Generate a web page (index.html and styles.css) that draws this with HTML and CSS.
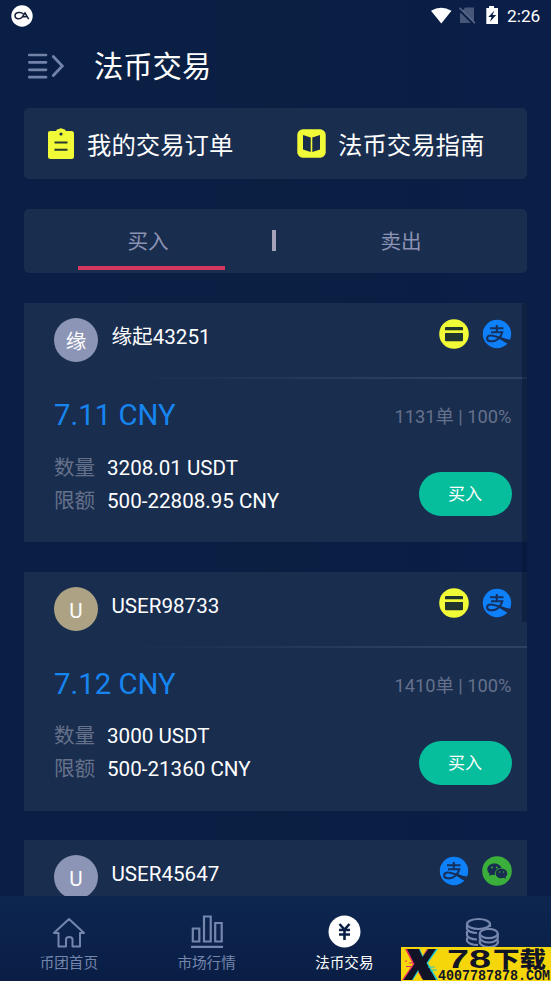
FILE: index.html
```html
<!DOCTYPE html>
<html lang="zh-CN">
<head>
<meta charset="utf-8">
<title>法币交易</title>
<link rel="stylesheet" href="styles.css">
</head>
<body>
<svg class="defs" width="0" height="0" aria-hidden="true">
  <symbol id="card-pay" viewBox="0 0 30 30">
    <circle cx="15" cy="15" r="14.8" fill="#f0fa36"/>
    <path d="M6 9Q6 8 7 8H23Q24 8 24 9V11.300H6ZM6 14H24V21Q24 22.300 22.700 22.300H7.300Q6 22.300 6 21Z" fill="#20352f"/>
  </symbol>
  <symbol id="alipay" viewBox="0 0 30 30">
    <circle cx="15" cy="15" r="14.200" fill="#0e81fa"/>
    <path d="M8 9.300H21.500M14.800 6V13M9 13.200H20.300C19 18.500 14.500 23 8.500 22.300C3.800 21.600 4 16.700 8.800 16.500C14.500 16.400 20 20.500 28.500 22.300" fill="none" stroke="#15305c" stroke-width="2.100"/>
    <path d="M18 18.800Q23 20.500 29.500 20.800V23L27 25.500Q21 22.500 17 19.500Z" fill="#182d4f"/>
  </symbol>
  <symbol id="wechat" viewBox="0 0 30 30">
    <circle cx="15" cy="15" r="14.800" fill="#3aaf3c"/>
    <path d="M12.300 7.500C8.300 7.500 5.300 10 5.300 13.300C5.300 15.200 6.200 16.700 7.700 17.800L7 20L9.700 18.700Q11 19.100 12.800 19C12.300 14.800 15.500 12 19.500 12C18.800 9.300 16 7.500 12.300 7.500Z" fill="#182d4f"/>
    <path d="M19.500 12.700C16.200 12.700 13.700 14.800 13.700 17.400C13.700 20.100 16.200 22.200 19.500 22.200Q20.700 22.200 21.700 21.800L24 23L23.400 20.900C24.600 20 25.300 18.800 25.300 17.400C25.300 14.800 22.800 12.700 19.500 12.700Z" fill="#182d4f"/>
    <g fill="#3aaf3c"><circle cx="10" cy="11.500" r=".9"/><circle cx="14.700" cy="11.500" r=".9"/><circle cx="17.600" cy="16" r=".8"/><circle cx="21.500" cy="16" r=".8"/></g>
  </symbol>
</svg>

<div class="screen">
  <div class="status">
    <svg class="status-app" width="22" height="22" viewBox="0 0 22 22">
      <circle cx="11" cy="11" r="10.700" fill="#fff"/>
      <path d="M12.300 9C10 6.500 4 7 4 10.800C4 14.400 9 14.800 11.300 12L14 8L17.700 14.200M12 11.700H15.500" fill="none" stroke="#17233d" stroke-width="1.500"/>
    </svg>
    <svg class="status-icons" width="68" height="20" viewBox="0 0 68 20">
      <path d="M0 4.800Q10 -1.500 20.500 4.800L10.300 17.500Z" fill="#fff"/>
      <path d="M29 8L34 1.500H43V17H29Z" fill="#46577a"/>
      <path d="M27.500 2.500L43.500 18.500" stroke="#0a1f46" stroke-width="3"/>
      <path d="M28.500 1.800L44 17.300" stroke="#5b6b8c" stroke-width="1.500"/>
      <path d="M55.300 2H58V0H63V2H67V18H55.300Z" fill="#fff"/>
      <path d="M63.500 4.500L57.300 11H60.500L59 15.800L65.200 9H61.500Z" fill="#0a1f46"/>
    </svg>
    <span class="clock">2:26</span>
  </div>

  <header class="header">
    <svg width="37" height="26" viewBox="0 0 37 26" fill="none" stroke="#7383a8" stroke-width="2.700" stroke-linecap="round">
      <path d="M2.300 2H19M2.300 9.300H19M2.300 16.800H19M2.300 24.200H19"/>
      <path d="M26.300 3.500L35.300 13L26.300 22.500"/>
    </svg>
    <h1>法币交易</h1>
  </header>

  <main class="content">
    <section class="panel shortcuts">
      <a class="shortcut">
        <svg width="28" height="32" viewBox="0 0 28 32">
          <path d="M3 3H9Q9.500 1 12 1Q14 -.6 16 1Q18 1 19 3H24.500Q27 3 27 5.500V28.500Q27 31 24.500 31H3.500Q1 31 1 28.500V5Q1 3 3 3Z" fill="#f0fa36"/>
          <circle cx="14" cy="6" r="1.600" fill="#1a2d4b"/>
          <path d="M7.500 14.500H20.500M7.500 21.700H20.500" stroke="#26382f" stroke-width="2"/>
        </svg>
        <span>我的交易订单</span>
      </a>
      <a class="shortcut guide">
        <svg width="29" height="29" viewBox="0 0 29 29">
          <rect x=".3" y=".3" width="28.400" height="28.400" rx="5.500" fill="#f0fa36"/>
          <path d="M6 6L13.700 8.500V23L6 20.500ZM15.300 8.500L23 6V20.500L15.300 23Z" fill="#1a2d4b"/>
        </svg>
        <span>法币交易指南</span>
      </a>
    </section>

    <nav class="panel tabs">
      <a class="tab active">买入</a>
      <i class="divider"></i>
      <a class="tab">卖出</a>
    </nav>

    <section class="offers">
      <article class="offer">
        <div class="offer-head">
          <span class="avatar">缘</span><span class="name">缘起43251</span>
          <span class="methods"><svg><use href="#card-pay"/></svg><svg><use href="#alipay"/></svg></span>
        </div>
        <div class="offer-body">
          <div class="price-row"><strong>7.11 CNY</strong><span>1131单 | 100%</span></div>
          <div class="detail-row">
            <dl><dt>数量</dt><dd>3208.01 USDT</dd><dt>限额</dt><dd>500-22808.95 CNY</dd></dl>
            <button>买入</button>
          </div>
        </div>
      </article>
      <article class="offer">
        <div class="offer-head">
          <span class="avatar sand">U</span><span class="name">USER98733</span>
          <span class="methods"><svg><use href="#card-pay"/></svg><svg><use href="#alipay"/></svg></span>
        </div>
        <div class="offer-body">
          <div class="price-row"><strong>7.12 CNY</strong><span>1410单 | 100%</span></div>
          <div class="detail-row">
            <dl><dt>数量</dt><dd>3000 USDT</dd><dt>限额</dt><dd>500-21360 CNY</dd></dl>
            <button>买入</button>
          </div>
        </div>
      </article>
      <article class="offer">
        <div class="offer-head">
          <span class="avatar">U</span><span class="name">USER45647</span>
          <span class="methods"><svg><use href="#alipay"/></svg><svg><use href="#wechat"/></svg></span>
        </div>
      </article>
      <i class="scrollbar"></i>
    </section>
  </main>

  <footer class="bottom-nav">
    <a class="nav-item">
      <svg width="34" height="34" viewBox="0 0 34 34" fill="none" stroke="#7586ac" stroke-width="2" stroke-linejoin="round">
        <path d="M17 5L32 19H28V32.500H20.500V25.500Q20.500 23 17.200 23Q14 23 14 25.500V32.500H6.500V19H2Z"/>
      </svg>
      <span>币团首页</span>
    </a>
    <a class="nav-item">
      <svg width="34" height="34" viewBox="0 0 34 34" fill="none" stroke="#7586ac" stroke-width="2.200">
        <path d="M2.800 14.500H9.300V27.500H2.800ZM14 2.500H20.700V27.500H14ZM25.200 9H31.700V27.500H25.200ZM1 32.800H33"/>
      </svg>
      <span>市场行情</span>
    </a>
    <a class="nav-item current">
      <svg width="34" height="34" viewBox="0 0 34 34">
        <circle cx="17.500" cy="17.500" r="16" fill="#fff"/>
        <path d="M12.500 10L17.500 15.500L22.500 10M12 16H23M12 20.500H23M17.500 15.500V26" fill="none" stroke="#0a2047" stroke-width="2.600"/>
      </svg>
      <span>法币交易</span>
    </a>
    <a class="nav-item">
      <svg width="34" height="34" viewBox="0 0 34 34" fill="none" stroke="#7586ac" stroke-width="2.200">
        <ellipse cx="13.500" cy="10" rx="11.500" ry="5"/>
        <path d="M2 10V15Q3.500 18.500 12 19M2 17V21.500Q3.500 25 12 25.500M2 23.500V27Q4.500 31 13 31M25 10V13"/>
        <ellipse cx="23.800" cy="19.500" rx="9" ry="4.700"/>
        <path d="M14.800 19.500V24Q17 28.500 23.800 28.500T32.800 24V19.500M14.800 25.500V29Q17 33 23.800 33T32.800 29V25.500"/>
      </svg>
    </a>
  </footer>

  <svg class="badge" width="150" height="34" viewBox="0 0 150 34">
    <rect width="150" height="34" fill="#f5d60b"/>
    <path d="M4 2H17L21 10L26 2H34L24 16L34 32H21L16 23L10 33H1L12 17Z" fill="#e72b62"/>
    <path d="M7 2H19L22 9L28 2H37L27 16L37 33H24L18 24L12 33H4L15 17Z" fill="#24cbd0"/>
    <path d="M6 2H18L21.500 10L27.500 2H35L25.500 16L35 33H22L17 23L11 33H2.500L13.500 17Z" fill="#111426"/>
    <path d="M5 19.500H10M8 16H12M4 14H6" stroke="#e72b62" stroke-width="1.200"/>
    <path d="M27 20H34M29 23H36" stroke="#24cbd0" stroke-width="1"/>
    <text class="badge-num" x="46" y="21" textLength="44" lengthAdjust="spacingAndGlyphs">78</text>
    <text class="badge-cjk" x="92" y="20" textLength="53" lengthAdjust="spacingAndGlyphs">下载</text>
    <text class="badge-url" x="37" y="33" textLength="112" lengthAdjust="spacingAndGlyphs">4007787878.COM</text>
  </svg>
</div>
</body>
</html>
```
FILE: styles.css
```css
* { box-sizing: border-box; margin: 0; padding: 0; }

body {
  background: #0a1f46;
  color: #fff;
  font-family: Roboto, "Noto Sans CJK SC", sans-serif;
  font-size: 20.6px;
}

.defs { position: absolute; }

.screen {
  position: relative;
  display: flex;
  flex-direction: column;
  width: 551px;
  height: 981px;
  overflow: hidden;
  background: linear-gradient(90deg, #0a1f46, #0a1f42 50%, #0a1e48);
}

.status {
  display: flex;
  align-items: center;
  height: 31px;
  padding: 0 10px 0 11px;
}
.status-icons { margin-left: auto; }
.clock { width: 34px; margin-left: 8px; font-size: 17.3px; line-height: 32px; white-space: nowrap; }

.header {
  display: flex;
  align-items: center;
  gap: 30px;
  height: 70px;
  padding-left: 27px;
}
h1 { padding-top: 2px; font-size: 29.3px; font-weight: 400; line-height: 40px; }

.content {
  display: flex;
  flex-direction: column;
  flex: 1;
  min-height: 0;
  padding: 7px 24.5px 0 24px;
}

.panel { display: flex; flex: none; border-radius: 5px; background: #192d4f; }

.shortcuts { height: 71px; margin-bottom: 29.5px; align-items: center; padding-left: 22.5px; }
.shortcut { display: flex; align-items: center; gap: 12.5px; width: 250.5px; font-size: 24.4px; line-height: 36px; white-space: nowrap; }
.shortcut span { padding-top: 4px; }
.guide { flex: none; width: auto; gap: 12px; }

.tabs { align-items: stretch; justify-content: space-between; height: 64.5px; margin-bottom: 30px; padding: 0 53px 0 54px; color: #8d93b2; }
.tab { width: 147px; height: 61.5px; border-bottom: 4px solid transparent; line-height: 67px; text-align: center; }
.tab:last-child { padding-left: 2px; }
.tab.active { padding-right: 7px; border-color: #d43861; }
.divider { align-self: center; width: 4px; height: 21px; margin-right: 4px; background: #a4a3b9; }

.offers { position: relative; display: flex; flex-direction: column; gap: 29.5px; flex: 1; min-height: 0; overflow: hidden; }
.offer { flex: none; height: 239px; background: #192d4f; }
.offer-head {
  display: flex;
  align-items: flex-start;
  height: 76px;
  padding: 15px 15px 0 30px;
  border-bottom: 2px solid;
  border-image: linear-gradient(90deg, transparent 20%, #2d4163 85%) 1;
}
.avatar { width: 44px; height: 44px; border-radius: 50%; background: #8c95b5; line-height: 49px; text-align: center; }
.sand { background: #ada384; }
.name { margin-left: 13.5px; line-height: 38px; }
.methods { display: flex; gap: 13px; margin-left: auto; }
.methods svg { width: 30px; height: 30px; margin-top: 1px; }

.offer-body { padding: 16px 15px 0 30px; }
.price-row { display: flex; justify-content: space-between; line-height: 40px; }
.price-row strong { color: #1685ef; font-size: 29.3px; font-weight: 400; }
.price-row span { color: #65718a; font-size: 18.3px; line-height: 44px; }
.detail-row { display: flex; justify-content: space-between; margin-top: 12.5px; }
dl { display: grid; grid-template-columns: 41px auto; column-gap: 12px; line-height: 33px; white-space: nowrap; }
dt { color: #65718a; }
button {
  width: 93px;
  height: 44px;
  margin-top: 20.5px;
  border: 0;
  border-radius: 22px;
  background: #06bd9c;
  color: #fff;
  font: 17px/44px Roboto, "Noto Sans CJK SC", sans-serif;
}
.scrollbar { position: absolute; top: 0; right: 0; width: 5px; height: 319px; background: rgba(3, 18, 46, .4); }

.bottom-nav {
  display: flex;
  flex: none;
  height: 85px;
  padding-top: 18px;
  background: linear-gradient(#0d2650, #0a1e45);
}
.nav-item { display: flex; flex-direction: column; align-items: center; width: 137.75px; color: #7586ac; font-size: 14.6px; line-height: 22px; }
.nav-item span { margin-top: 4px; }
.current { color: #fff; }

.badge { position: absolute; right: 0; bottom: 0; }
.badge-num { fill: #111426; font: 700 26px "Liberation Sans", sans-serif; }
.badge-cjk { fill: #111426; font: 900 22px "Noto Sans CJK SC", sans-serif; }
.badge-url { fill: #111426; font: bold 14px "Liberation Mono", monospace; }
```
